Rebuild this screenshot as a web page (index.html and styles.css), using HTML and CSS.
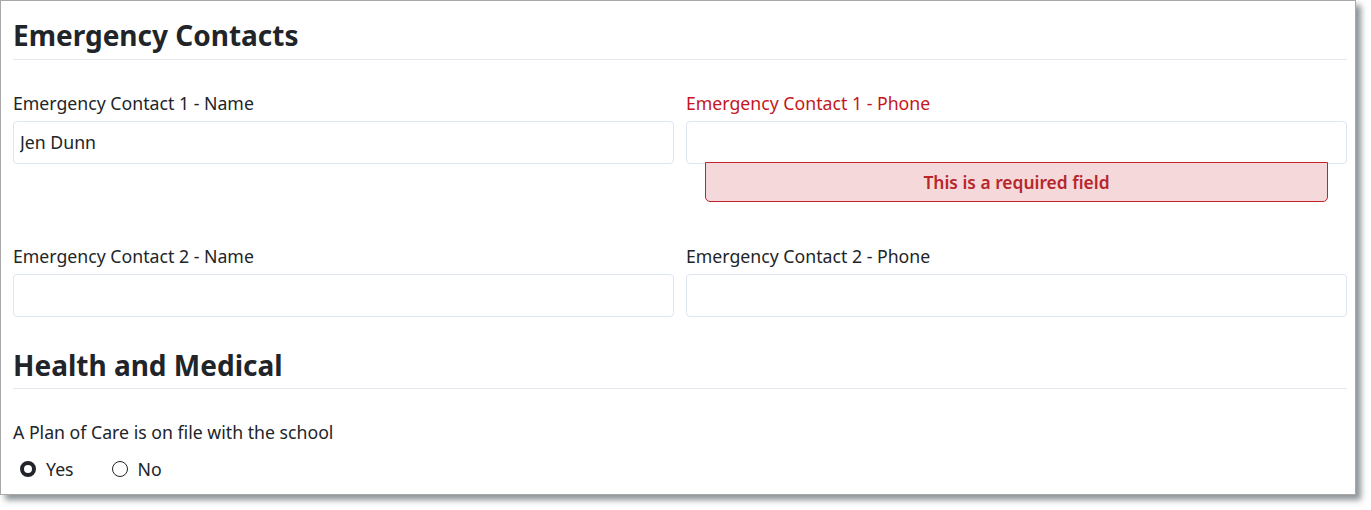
FILE: index.html
```html
<!DOCTYPE html>
<html lang="en">
<head>
<meta charset="utf-8">
<title>Emergency Contacts</title>
<link rel="stylesheet" href="styles.css">
</head>
<body>
<div class="frame">
  <section class="section">
    <h2 class="section-title">Emergency Contacts</h2>
    <div class="grid">
      <div class="field">
        <label class="field-label" for="ec1name">Emergency Contact 1 - Name</label>
        <input class="field-input" id="ec1name" type="text" value="Jen Dunn">
      </div>
      <div class="field field-invalid">
        <label class="field-label" for="ec1phone">Emergency Contact 1 - Phone</label>
        <div class="input-wrap">
          <input class="field-input" id="ec1phone" type="text">
          <div class="error-tip">This is a required field</div>
        </div>
      </div>
      <div class="field">
        <label class="field-label" for="ec2name">Emergency Contact 2 - Name</label>
        <input class="field-input" id="ec2name" type="text">
      </div>
      <div class="field">
        <label class="field-label" for="ec2phone">Emergency Contact 2 - Phone</label>
        <input class="field-input" id="ec2phone" type="text">
      </div>
    </div>
  </section>
  <section class="section">
    <h2 class="section-title">Health and Medical</h2>
    <div class="question">A Plan of Care is on file with the school</div>
    <div class="radio-group">
      <label class="radio"><input type="radio" name="plan" checked><span>Yes</span></label>
      <label class="radio"><input type="radio" name="plan"><span>No</span></label>
    </div>
  </section>
</div>
</body>
</html>
```

FILE: styles.css
```css
* { box-sizing: border-box; }

html, body {
  margin: 0;
  padding: 0;
  background: #ffffff;
}

body {
  font-family: "Noto Sans", "Open Sans", sans-serif;
  font-size: 17.7px;
  color: #212529;
  min-height: 510px;
  padding-bottom: 15px;
}

.frame {
  width: 1356px;
  height: 495px;
  border: 1px solid #a8a8a8;
  background: #ffffff;
  box-shadow: 5px 5px 6px rgba(80, 90, 98, 0.65);
  padding: 18px 8px 0 12px;
}

.section-title {
  margin: 0;
  font-size: 28px;
  font-weight: 700;
  line-height: 1.2;
  padding-bottom: 6px;
  border-bottom: 1px solid #e2e7ee;
  color: #212529;
}

.grid {
  display: grid;
  grid-template-columns: 1fr 1fr;
  column-gap: 12px;
  row-gap: 80px;
  margin-top: 31px;
}

.field {
  display: flex;
  flex-direction: column;
}

.field-label {
  line-height: 24px;
  margin-bottom: 6px;
}

.field-input {
  width: 100%;
  height: 43px;
  border: 1px solid #dde6f1;
  border-radius: 4px;
  padding: 0 6px;
  font: inherit;
  color: #212529;
  background: #fff;
  outline: none;
}

.field-invalid .field-label {
  color: #c4161c;
}

.input-wrap {
  position: relative;
}

.error-tip {
  position: absolute;
  left: 19px;
  right: 19px;
  top: 41px;
  height: 40px;
  background: #f5d8da;
  border: 1px solid #c0232a;
  border-radius: 0 0 5px 5px;
  color: #b8262c;
  font-size: 17.4px;
  font-weight: 600;
  text-align: center;
  line-height: 38px;
}

.section + .section {
  margin-top: 32px;
}

.question {
  margin-top: 31px;
  line-height: 24px;
}

.radio-group {
  display: flex;
  gap: 38px;
  margin-top: 13px;
  padding-left: 7px;
}

.radio {
  display: flex;
  align-items: center;
  gap: 10px;
  line-height: 24px;
}

.radio input {
  appearance: none;
  -webkit-appearance: none;
  margin: 0;
  width: 16px;
  height: 16px;
  border-radius: 50%;
  border: 1.5px solid #212529;
  background: #fff;
}

.radio input:checked {
  border: 4.5px solid #212529;
}
```
